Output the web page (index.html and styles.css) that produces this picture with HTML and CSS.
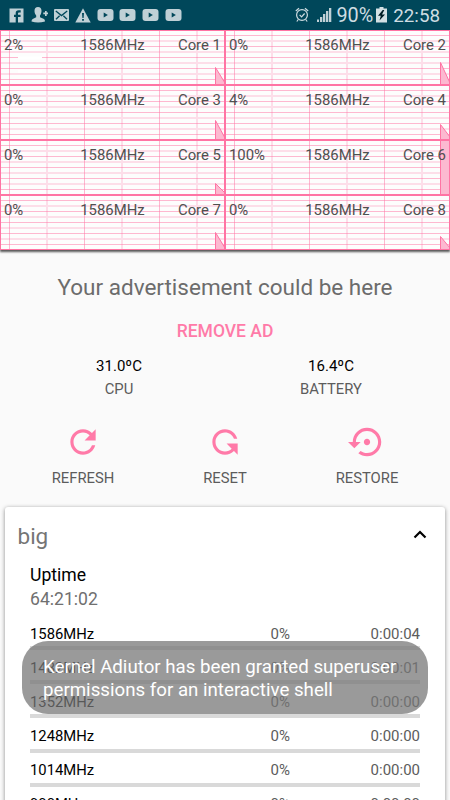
FILE: index.html
```html
<!DOCTYPE html>
<html lang="en">
<head>
<meta charset="utf-8">
<title>Kernel Adiutor</title>
<link rel="stylesheet" href="styles.css">
</head>
<body>
<svg class="defs" aria-hidden="true">
  <symbol id="grid" viewBox="0 0 225 55">
    <path class="grid-line" d="M0 5.500H225M0 16.500H225M0 27.500H225M0 38.500H225M0 49.500H225M9.500 0V55M84.500 0V55M159.500 0V55"/>
    <path class="grid-soft" d="M0 11H225M0 22H225M0 33H225M0 44H225M47 0V55M122 0V55M197 0V55"/>
  </symbol>
  <symbol id="play" viewBox="0 0 17 14">
    <rect x=".5" y="1" width="16" height="12" rx="3" fill="#bfd0d6"/>
    <path d="M6.700 4.600v5l4.200-2.500z" fill="#00475a"/>
  </symbol>
</svg>
<header class="status">
  <div class="notices">
    <svg width="15" height="15" viewBox="0 0 15 15"><path d="M.5.5h14v14h-14z" fill="#bfd0d6"/><path d="M9 15V9h2.600V6.700H9V5.400q0-1 1-1h1.700V2.200H9.600Q6.700 2.200 6.700 5v1.700H5V9h1.700v6z" fill="#00475a"/></svg>
    <svg width="17" height="16" viewBox="0 0 17 16"><path d="M7 0c2.500 0 3.700 1.700 3.500 4.200-.2 2.500-1 3.500-1.500 4.300v1.700l4 1.700q1 .6 1 2.600-7 2-13.500 0 0-2 1.200-2.600L5.200 10.200V8.500C4.200 7.200 3.500 5.700 3.500 4 3.500 1.500 4.700 0 7 0zM12.300 5.600h1.700V4h1.700v1.600h1.300v1.700h-1.300V9H14V7.300h-1.700z" fill="#bfd0d6"/></svg>
    <svg width="15" height="14" viewBox="0 0 15 14"><rect y="1" width="15" height="12" rx="1" fill="#bfd0d6"/><path d="M1.800 3l5.700 4.600L13.200 3M2 11.300l3.600-3.500M13 11.300L9.400 7.800" fill="none" stroke="#00475a" stroke-width="1.300"/></svg>
    <svg width="16" height="15" viewBox="0 0 16 15"><path d="M8 .3L15.700 14.500H.3z" fill="#bfd0d6"/><path d="M7 5h2l-.4 5H7.400zM7.100 11h1.800v1.800H7.100z" fill="#00475a"/></svg>
    <svg width="17" height="14"><use href="#play"/></svg>
    <svg width="17" height="14"><use href="#play"/></svg>
    <svg width="17" height="14"><use href="#play"/></svg>
    <svg width="17" height="14"><use href="#play"/></svg>
  </div>
  <div class="system">
    <svg width="14" height="16" viewBox="0 0 14 16"><g fill="none" stroke="#cfdde2" stroke-width="1.200"><circle cx="7" cy="8" r="5.400"/><path d="M4.600 7.800l2 2 3-3.300M.8 4L4 1.200M13.200 4L10 1.200M3.300 12.500l-1.500 2M10.700 12.500l1.500 2"/></g></svg>
    <svg width="16" height="16" viewBox="0 0 16 16"><path d="M1 12.500h2V15H1zM4 10h2.300v5H4zM7 7h2.300v8H7zM10 4h2.300v11H10zM13 1h2.300v14H13z" fill="#bfd0d6"/></svg>
    <span class="percent">90%</span>
    <svg width="11" height="16" viewBox="0 0 11 16"><path d="M3.500 0h4v1.500H11V15.500H0V1.500h3.500z" fill="#d3e0e4"/><path d="M6.700 3L2 8.700h2.800L3.500 13.500 9 7.500H6l2.300-4.500z" fill="#001d25"/></svg>
    <span class="clock">22:58</span>
  </div>
</header>
<section class="cores">
  <div class="core"><svg class="plot" viewBox="0 0 225 55"><use href="#grid"/><path class="load" d="M215.500 55V37.500L225 53V55z"/><path d="M18 26.500h24v3H18zM18 40h24v3H18z" fill="#fff"/></svg><span>2%</span><span>1586MHz</span><span>Core 1</span></div>
  <div class="core"><svg class="plot" viewBox="0 0 225 55"><use href="#grid"/><path class="load" d="M215.500 55V32.500L225 53V55z"/></svg><span>0%</span><span>1586MHz</span><span>Core 2</span></div>
  <div class="core"><svg class="plot" viewBox="0 0 225 55"><use href="#grid"/><path class="load" d="M215.500 55V35.500L225 53V55z"/></svg><span>0%</span><span>1586MHz</span><span>Core 3</span></div>
  <div class="core"><svg class="plot" viewBox="0 0 225 55"><use href="#grid"/><path class="load" d="M215.500 55V39.500L225 52V55z"/></svg><span>4%</span><span>1586MHz</span><span>Core 4</span></div>
  <div class="core"><svg class="plot" viewBox="0 0 225 55"><use href="#grid"/><path class="load" d="M215.500 55V43.500L225 53V55z"/></svg><span>0%</span><span>1586MHz</span><span>Core 5</span></div>
  <div class="core"><svg class="plot" viewBox="0 0 225 55"><use href="#grid"/><path class="load" d="M215.500 56V-1H226V56z"/></svg><span>100%</span><span>1586MHz</span><span>Core 6</span></div>
  <div class="core"><svg class="plot" viewBox="0 0 225 55"><use href="#grid"/><path class="load" d="M215.500 55V37.500L225 53V55z"/></svg><span>0%</span><span>1586MHz</span><span>Core 7</span></div>
  <div class="core"><svg class="plot" viewBox="0 0 225 55"><use href="#grid"/><path class="load" d="M215.500 55V41.500L225 53V55z"/></svg><span>0%</span><span>1586MHz</span><span>Core 8</span></div>
</section>
<section class="ad">
  <p class="ad-text">Your advertisement could be here</p>
  <p class="ad-remove">REMOVE AD</p>
</section>
<section class="temps">
  <div><b>31.0ºC</b><span>CPU</span></div>
  <div><b>16.4ºC</b><span>BATTERY</span></div>
</section>
<section class="actions">
  <div><svg width="38" height="38" viewBox="0 0 24 24"><path d="M17.650 6.350C16.200 4.900 14.210 4 12 4c-4.420 0-7.990 3.580-7.990 8s3.570 8 7.990 8c3.730 0 6.840-2.550 7.730-6h-2.080c-.82 2.330-3.040 4-5.650 4-3.310 0-6-2.690-6-6s2.690-6 6-6c1.660 0 3.140.69 4.220 1.780L13 11h7V4l-2.350 2.350z"/></svg><span>REFRESH</span></div>
  <div><svg width="38" height="38" viewBox="0 0 24 24"><path d="M17.650 17.650C16.200 19.100 14.210 20 12 20c-4.420 0-7.990-3.580-7.990-8s3.570-8 7.990-8c3.730 0 6.840 2.550 7.730 6h-2.080c-.82-2.330-3.040-4-5.650-4-3.310 0-6 2.690-6 6s2.690 6 6 6c1.660 0 3.140-.69 4.220-1.780L13 13h7v7l-2.350-2.350z"/></svg><span>RESET</span></div>
  <div><svg width="38" height="38" viewBox="0 0 24 24"><path d="M14 12c0-1.100-.9-2-2-2s-2 .9-2 2 .9 2 2 2 2-.9 2-2zm-2-9c-4.970 0-9 4.030-9 9H0l4 4 4-4H5c0-3.870 3.130-7 7-7s7 3.130 7 7-3.130 7-7 7c-1.510 0-2.910-.49-4.060-1.300l-1.420 1.440C8.040 20.300 9.940 21 12 21c4.970 0 9-4.030 9-9s-4.030-9-9-9z"/></svg><span>RESTORE</span></div>
</section>
<section class="card">
  <div class="card-head"><h2>big</h2><svg width="14" height="9" viewBox="0 0 14 9"><path d="M1.500 7.500L7 2l5.500 5.500" fill="none" stroke="#000" stroke-width="2.200"/></svg></div>
  <div class="card-body">
    <p class="label">Uptime</p>
    <p class="value">64:21:02</p>
    <div class="freq"><b>1586MHz</b><span>0%</span><span>0:00:04</span></div>
    <div class="freq"><b>1482MHz</b><span>0%</span><span>0:00:01</span></div>
    <div class="freq"><b>1352MHz</b><span>0%</span><span>0:00:00</span></div>
    <div class="freq"><b>1248MHz</b><span>0%</span><span>0:00:00</span></div>
    <div class="freq"><b>1014MHz</b><span>0%</span><span>0:00:00</span></div>
    <div class="freq"><b>900MHz</b><span>0%</span><span>0:00:00</span></div>
  </div>
</section>
<div class="toast">Kernel Adiutor has been granted superuser<br>permissions for an interactive shell</div>
</body>
</html>
```
FILE: styles.css
```css
* { box-sizing: border-box; }
body {
  margin: 0;
  width: 450px;
  height: 800px;
  overflow: hidden;
  position: relative;
  background: #fafafa;
  color: #5c5c5c;
  font: 15px/20px Roboto, sans-serif;
}
p, h2 { margin: 0; font-weight: 400; }
b { font-weight: 400; color: #000; }
svg { display: block; flex: none; }
.defs { position: absolute; width: 0; height: 0; }

.status {
  height: 30px;
  padding: 0 10px 0 9px;
  display: flex;
  justify-content: space-between;
  align-items: center;
  background: #00475a;
}
.notices { display: flex; align-items: center; gap: 5.700px; }
.notices svg:nth-child(2) { margin: 0 1px 0 1px; }
.system { display: flex; align-items: center; color: #cfdde2; }
.system svg:nth-child(2) { margin-left: 7px; }
.percent { margin: 1px 3px 0 4px; font-size: 19.800px; }
.clock { margin: 1px 0 0 6px; font-size: 18.800px; }

.cores {
  display: grid;
  grid-template-columns: 225px 225px;
  grid-auto-rows: 55px;
  background: #fdfdfd;
  box-shadow: 0 2px 2px rgba(0, 0, 0, .65);
  height: 220px;
}
.core {
  position: relative;
  display: grid;
  grid-template-columns: 1fr 1fr 1fr;
  padding: 5px 4px 0;
  color: #505050;
}
.core::after {
  content: "";
  position: absolute;
  inset: 0;
  border: 1px solid #ff74a4;
}
.core span { position: relative; font-size: 14.900px; }
.core span:nth-of-type(2) { text-align: center; }
.core span:nth-of-type(3) { text-align: right; }
.plot { position: absolute; left: 0; top: 0; width: 225px; height: 55px; }
.grid-line { fill: none; stroke: #ff74a4; stroke-opacity: .5; }
.grid-soft { fill: none; stroke: #ff74a4; stroke-opacity: .22; stroke-width: 2; }
.load { fill: #fcb9d0; stroke: #ff74a4; }

.ad { text-align: center; padding-top: 22px; }
.ad-text { font-size: 22.500px; line-height: 30px; color: #6c6c6c; }
.ad-remove { margin-top: 19px; font-size: 17.500px; font-weight: 500; color: #ff7aa8; }

.temps { display: grid; grid-template-columns: 1fr 1fr; padding: 15px 13px 0; }
.temps div, .actions div { display: flex; flex-direction: column; align-items: center; }
.temps span { margin-top: 3px; font-size: 14.800px; }

.actions { display: grid; grid-template-columns: repeat(3, 142px); justify-content: center; padding-top: 24px; }
.actions svg { fill: #ff7aa8; }
.actions span { margin-top: 7px; font-size: 14.800px; }

.card {
  margin: 19px 5px 0;
  height: 320px;
  background: #fff;
  border-radius: 3px;
  box-shadow: 0 1px 4px rgba(0, 0, 0, .45);
}
.card-head { display: flex; justify-content: space-between; align-items: center; height: 57px; padding: 1px 18px 0 12.500px; }
.card-head h2 { font-size: 22.500px; line-height: 30px; color: #757575; }
.card-head svg { margin-bottom: 3px; }
.card-body { padding: 0 25px; }
.label { font-size: 17.600px; line-height: 23px; color: #000; }
.value { font-size: 17.600px; line-height: 24px; color: #707070; margin-bottom: 12.500px; }
.freq {
  display: grid;
  grid-template-columns: 1fr 1fr 1fr;
  grid-template-rows: 22.500px 4px;
  height: 34.200px;
  line-height: 20px;
}
.freq b { font-size: 14.800px; }
.freq::after { content: ""; grid-column: 1 / 4; background: #d9d9d9; }
.freq span { text-align: right; }

.toast {
  position: absolute;
  left: 22px;
  top: 641px;
  width: 406px;
  height: 73px;
  padding: 15px 21px;
  border-radius: 26px;
  background: rgba(119, 119, 119, .74);
  color: #fff;
  font-size: 18.700px;
  line-height: 22.500px;
  white-space: nowrap;
}
```
